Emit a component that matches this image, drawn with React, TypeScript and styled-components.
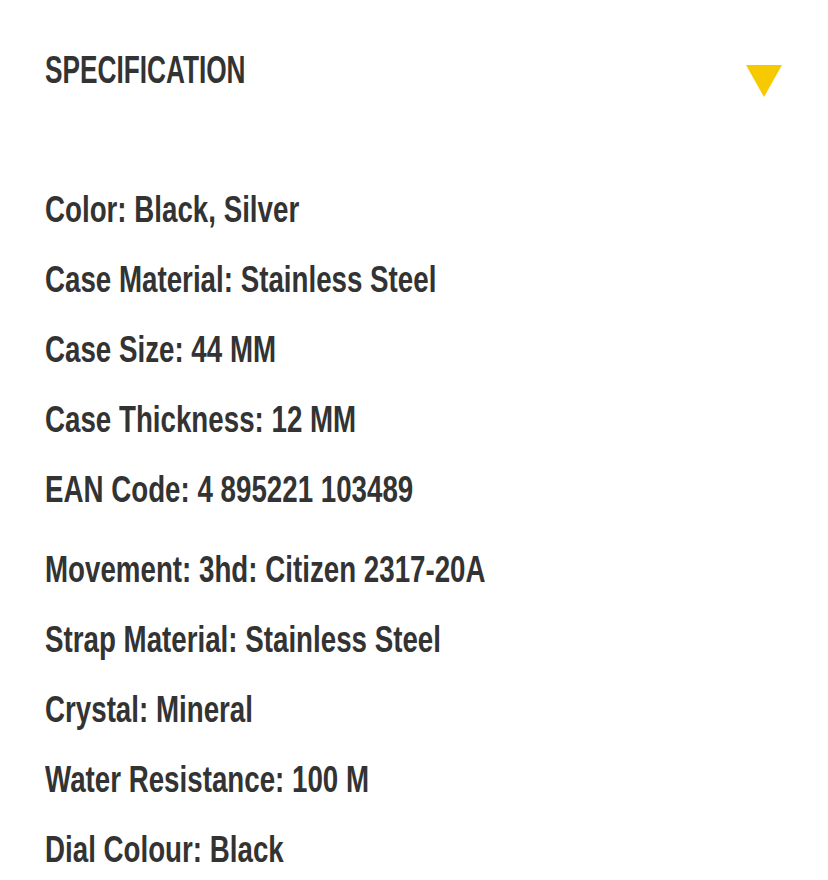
import React from "react"
import styled, { createGlobalStyle } from "styled-components"

const GlobalStyle = createGlobalStyle`
  body {
    margin: 0;
    background: #ffffff;
    font-family: "Liberation Sans", Arial, sans-serif;
  }
`

const Page = styled.div`
  padding: 51px 46px 0 45px;
  color: #333333;
`

const Header = styled.div`
  display: flex;
  justify-content: space-between;
  align-items: flex-start;
`

/* condensed look: no narrow face installed, so squeeze the bold face */
const Title = styled.h2`
  margin: 0;
  font-size: 38px;
  line-height: 38px;
  font-weight: 700;
  white-space: nowrap;
  transform: scaleX(0.69);
  transform-origin: left center;
`

const Toggle = styled.svg`
  margin-top: 14px;
  width: 36px;
  height: 32px;
  flex-shrink: 0;
`

const SpecList = styled.ul`
  list-style: none;
  margin: 78px 0 0;
  padding: 0;
`

const SpecItem = styled.li<{ $gap?: boolean }>`
  font-size: 36px;
  line-height: 70px;
  font-weight: 700;
  white-space: nowrap;
  transform: scaleX(0.77);
  transform-origin: left center;
  margin-bottom: ${(p) => (p.$gap ? "10px" : "0")};
`

const specs = [
  "Color: Black, Silver",
  "Case Material: Stainless Steel",
  "Case Size: 44 MM",
  "Case Thickness: 12 MM",
  "EAN Code: 4 895221 103489",
  "Movement: 3hd: Citizen 2317-20A",
  "Strap Material: Stainless Steel",
  "Crystal: Mineral",
  "Water Resistance: 100 M",
  "Dial Colour: Black",
]

export default function App() {
  return (
    <Page>
      <GlobalStyle />
      <Header>
        <Title>SPECIFICATION</Title>
        <Toggle viewBox="0 0 36 32">
          <polygon points="0,0 36,0 18,32" fill="#f7c900" />
        </Toggle>
      </Header>
      <SpecList>
        {specs.map((s) => (
          <SpecItem key={s} $gap={s.startsWith("EAN")}>
            {s}
          </SpecItem>
        ))}
      </SpecList>
    </Page>
  )
}
